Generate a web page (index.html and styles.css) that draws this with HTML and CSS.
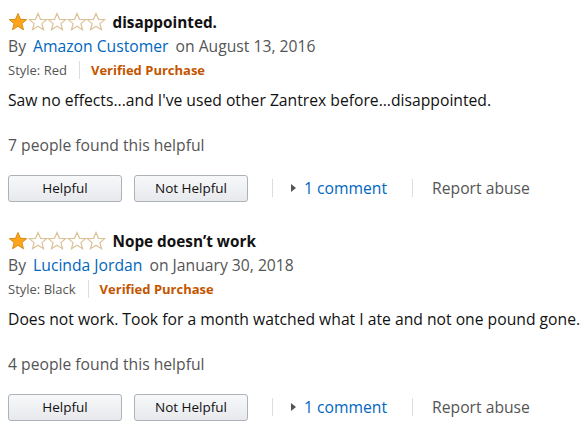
FILE: index.html
```html
<!DOCTYPE html>
<html>
<head>
  <link rel="stylesheet" href="styles.css">
</head>
<body>
  <div class="reviews">
    <div class="review">
      <div class="review-title">
        <span class="stars">
          <svg viewBox="0 0 20 20"><polygon class="full" points="10,1.5 12.5,7.3 18.7,7.6 13.9,11.6 15.5,17.8 10,14.3 4.5,17.8 6.1,11.6 1.3,7.6 7.5,7.3"/></svg>
          <svg viewBox="0 0 20 20"><polygon class="empty" points="10,1.5 12.5,7.3 18.7,7.6 13.9,11.6 15.5,17.8 10,14.3 4.5,17.8 6.1,11.6 1.3,7.6 7.5,7.3"/></svg>
          <svg viewBox="0 0 20 20"><polygon class="empty" points="10,1.5 12.5,7.3 18.7,7.6 13.9,11.6 15.5,17.8 10,14.3 4.5,17.8 6.1,11.6 1.3,7.6 7.5,7.3"/></svg>
          <svg viewBox="0 0 20 20"><polygon class="empty" points="10,1.5 12.5,7.3 18.7,7.6 13.9,11.6 15.5,17.8 10,14.3 4.5,17.8 6.1,11.6 1.3,7.6 7.5,7.3"/></svg>
          <svg viewBox="0 0 20 20"><polygon class="empty" points="10,1.5 12.5,7.3 18.7,7.6 13.9,11.6 15.5,17.8 10,14.3 4.5,17.8 6.1,11.6 1.3,7.6 7.5,7.3"/></svg>
        </span>
        <span class="title">disappointed.</span>
      </div>
      <div class="byline">By <a href="#">Amazon Customer</a> on August 13, 2016</div>
      <div class="meta"><span class="style">Style: Red</span><span class="verified">Verified Purchase</span></div>
      <p class="body">Saw no effects...and I've used other Zantrex before...disappointed.</p>
      <p class="helpful-count">7 people found this helpful</p>
      <div class="actions">
        <button class="btn">Helpful</button>
        <button class="btn">Not Helpful</button>
        <span class="divider"></span>
        <a href="#" class="comments"><span class="arrow"></span>1 comment</a>
        <span class="divider wide"></span>
        <a href="#" class="report">Report abuse</a>
      </div>
    </div>

    <div class="review">
      <div class="review-title">
        <span class="stars">
          <svg viewBox="0 0 20 20"><polygon class="full" points="10,1.5 12.5,7.3 18.7,7.6 13.9,11.6 15.5,17.8 10,14.3 4.5,17.8 6.1,11.6 1.3,7.6 7.5,7.3"/></svg>
          <svg viewBox="0 0 20 20"><polygon class="empty" points="10,1.5 12.5,7.3 18.7,7.6 13.9,11.6 15.5,17.8 10,14.3 4.5,17.8 6.1,11.6 1.3,7.6 7.5,7.3"/></svg>
          <svg viewBox="0 0 20 20"><polygon class="empty" points="10,1.5 12.5,7.3 18.7,7.6 13.9,11.6 15.5,17.8 10,14.3 4.5,17.8 6.1,11.6 1.3,7.6 7.5,7.3"/></svg>
          <svg viewBox="0 0 20 20"><polygon class="empty" points="10,1.5 12.5,7.3 18.7,7.6 13.9,11.6 15.5,17.8 10,14.3 4.5,17.8 6.1,11.6 1.3,7.6 7.5,7.3"/></svg>
          <svg viewBox="0 0 20 20"><polygon class="empty" points="10,1.5 12.5,7.3 18.7,7.6 13.9,11.6 15.5,17.8 10,14.3 4.5,17.8 6.1,11.6 1.3,7.6 7.5,7.3"/></svg>
        </span>
        <span class="title">Nope doesn’t work</span>
      </div>
      <div class="byline">By <a href="#">Lucinda Jordan</a> on January 30, 2018</div>
      <div class="meta"><span class="style">Style: Black</span><span class="verified">Verified Purchase</span></div>
      <p class="body">Does not work. Took for a month watched what I ate and not one pound gone.</p>
      <p class="helpful-count">4 people found this helpful</p>
      <div class="actions">
        <button class="btn">Helpful</button>
        <button class="btn">Not Helpful</button>
        <span class="divider"></span>
        <a href="#" class="comments"><span class="arrow"></span>1 comment</a>
        <span class="divider wide"></span>
        <a href="#" class="report">Report abuse</a>
      </div>
    </div>
  </div>
</body>
</html>
```

FILE: styles.css
```css
body {
  margin: 0;
  background: #fff;
  font-family: "Open Sans", "Noto Sans", sans-serif;
  color: #111;
}

.reviews {
  padding: 10px 0 0 8px;
}

.review {
  height: 219px;
}

.review-title {
  display: flex;
  align-items: center;
  height: 24px;
}

.stars {
  display: flex;
  margin-right: 7px;
}

.stars svg {
  width: 20px;
  height: 20px;
  margin-right: -0.5px;
}

.stars .full {
  fill: #ffa41c;
  stroke: #d58e12;
  stroke-width: 1;
}

.stars .empty {
  fill: #fff;
  stroke: #dcc299;
  stroke-width: 1.2;
}

.title {
  font-size: 15.3px;
  font-weight: bold;
}

.byline {
  font-size: 15.7px;
  color: #555;
  line-height: 22px;
  margin-top: 1px;
}

.byline a {
  color: #0066c0;
  text-decoration: none;
  margin: 0 3px;
}

.meta {
  display: flex;
  align-items: center;
  font-size: 13px;
  line-height: 22px;
  margin-top: 2px;
}

.meta .style {
  color: #555;
  padding-right: 12px;
  border-right: 1px solid #ddd;
  line-height: 18px;
}

.meta .verified {
  color: #c45500;
  font-weight: bold;
  padding-left: 11px;
}

.body {
  margin: 8px 0 0 0;
  font-size: 15.7px;
  line-height: 22px;
  white-space: nowrap;
}

.helpful-count {
  margin: 23px 0 0 0;
  font-size: 15.7px;
  line-height: 22px;
  color: #555;
}

.actions {
  display: flex;
  align-items: center;
  margin-top: 18px;
  height: 28px;
}

.btn {
  width: 114px;
  height: 27px;
  margin-right: 12px;
  border: 1px solid #adb1b8;
  border-radius: 3px;
  background: linear-gradient(#f7f8fa, #e7e9ec);
  font-family: inherit;
  font-size: 13.5px;
  color: #111;
}

.divider {
  width: 1px;
  height: 18px;
  background: #ddd;
  margin: 0 18px 0 12px;
}

.divider.wide {
  margin: 0 19px 0 25px;
}

.comments {
  display: flex;
  align-items: center;
  color: #0066c0;
  text-decoration: none;
  font-size: 15.7px;
}

.arrow {
  width: 0;
  height: 0;
  border-left: 5px solid #555;
  border-top: 4px solid transparent;
  border-bottom: 4px solid transparent;
  margin-right: 8px;
}

.report {
  color: #555;
  text-decoration: none;
  font-size: 15.7px;
}
```
